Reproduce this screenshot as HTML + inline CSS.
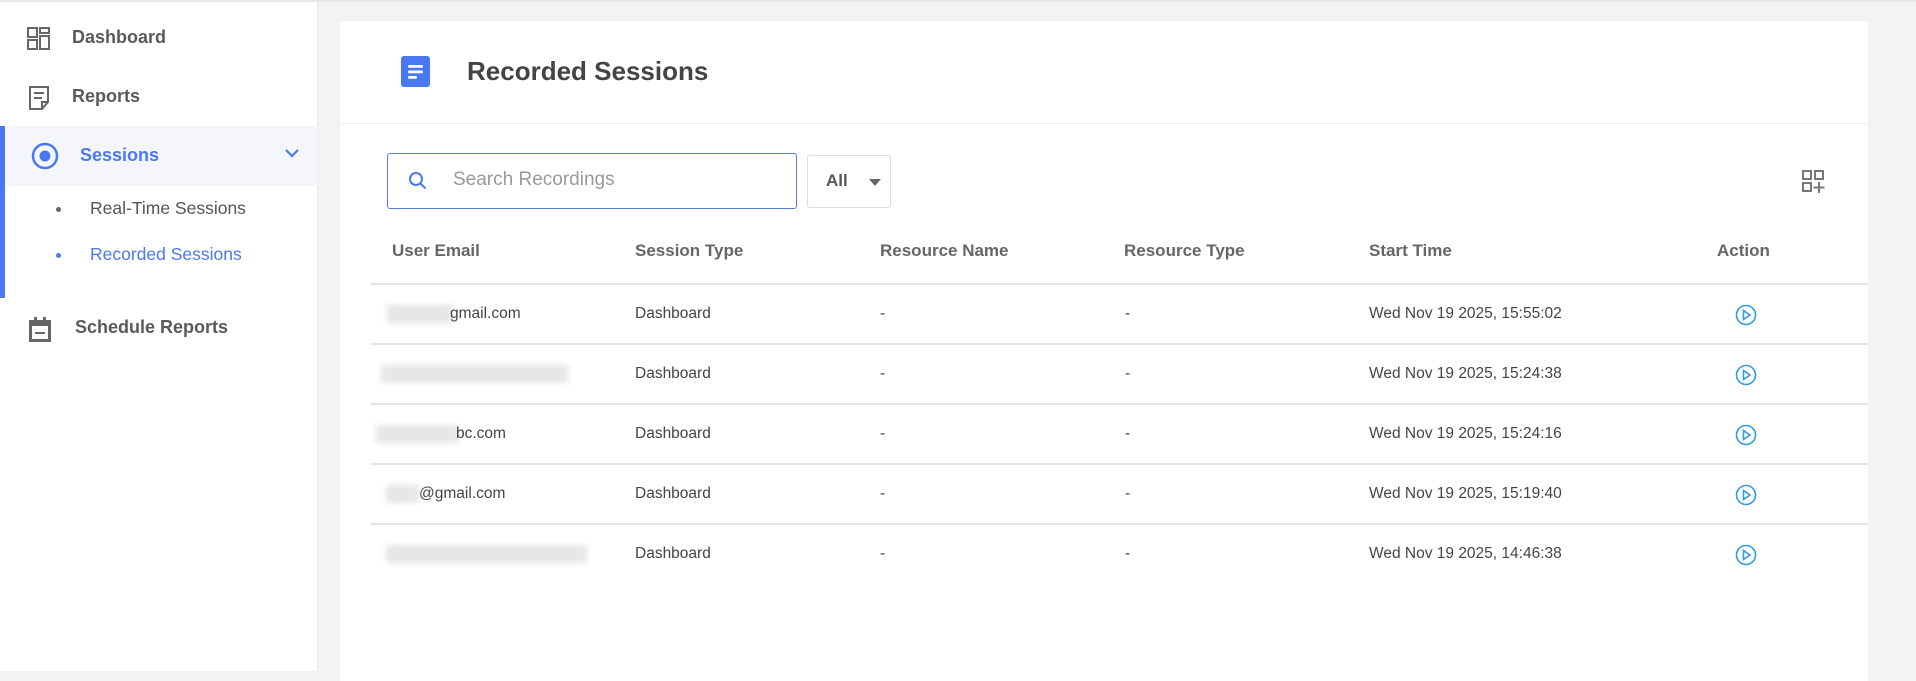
<!DOCTYPE html>
<html><head><meta charset="utf-8"><style>
*{box-sizing:border-box;margin:0;padding:0}
body{width:1916px;height:671px;overflow:hidden;background:#f3f3f3;font-family:"Liberation Sans",sans-serif;position:relative}
.side{position:absolute;left:0;top:0;width:318px;height:671px;background:#fff;border-right:1px solid #ececec}
.it{position:absolute;font-size:18px;font-weight:bold;color:#5a5a5a}
.sub{position:absolute;font-size:17.5px;color:#555}
.card{position:absolute;left:340px;top:21px;width:1528px;height:660px;background:#fff}
.th{position:absolute;top:220px;font-size:17px;font-weight:bold;color:#666}
.td{position:absolute;font-size:15.5px;color:#444}
.ln{position:absolute;left:31px;width:1497px;height:2px;background:#e4e4e4}
.blur{position:absolute;height:18px;background:#e6e6e6;filter:blur(3px)}
.pl{position:absolute;left:1395px}
</style></head><body>
<div class="side">
 <svg style="position:absolute;left:27px;top:27px" width="23" height="23" viewBox="0 0 23 23" fill="none" stroke="#666" stroke-width="2"><rect x="1" y="1" width="9" height="9"/><rect x="13" y="1" width="9" height="5"/><rect x="1" y="13" width="9" height="9"/><rect x="13" y="9" width="9" height="13"/></svg>
 <div class="it" style="left:72px;top:27px">Dashboard</div>
 <svg style="position:absolute;left:29px;top:86px" width="20" height="24" viewBox="0 0 20 24" fill="none" stroke="#666" stroke-width="2"><path d="M1 1h18v15l-6 7H1z M13 23v-7h6 M5 7h10 M5 12h8"/></svg>
 <div class="it" style="left:72px;top:86px">Reports</div>
 <div style="position:absolute;left:0;top:126px;width:318px;height:60px;background:#f4f6fc"></div>
 <div style="position:absolute;left:0;top:126px;width:5px;height:172px;background:#4a78f5"></div>
 <svg style="position:absolute;left:31px;top:142px" width="28" height="28" viewBox="0 0 28 28"><circle cx="14" cy="14" r="12" fill="none" stroke="#4a78f5" stroke-width="2.5"/><circle cx="14" cy="14" r="5.5" fill="#4a78f5"/></svg>
 <div class="it" style="left:80px;top:145px;color:#4a78f5">Sessions</div>
 <svg style="position:absolute;left:284px;top:148px" width="16" height="10" viewBox="0 0 16 10" fill="none" stroke="#4a78f5" stroke-width="2.2"><path d="M2 2l6 6 6-6"/></svg>
 <div style="position:absolute;left:56px;top:207px;width:5px;height:5px;border-radius:50%;background:#666"></div>
 <div class="sub" style="left:90px;top:198px">Real-Time Sessions</div>
 <div style="position:absolute;left:56px;top:253px;width:5px;height:5px;border-radius:50%;background:#4a78f5"></div>
 <div class="sub" style="left:90px;top:244px;color:#4a78f5">Recorded Sessions</div>
 <svg style="position:absolute;left:28px;top:317px" width="24" height="26" viewBox="0 0 24 26"><rect x="1" y="3" width="22" height="22" fill="#666"/><rect x="4" y="9" width="16" height="13" fill="#fff"/><rect x="6" y="0" width="3" height="5" fill="#666"/><rect x="15" y="0" width="3" height="5" fill="#666"/><rect x="7" y="15" width="10" height="2" fill="#666"/></svg>
 <div class="it" style="left:75px;top:317px">Schedule Reports</div>
</div>
<div style="position:absolute;left:0;top:0;width:1916px;height:2px;background:#e6e6e6"></div>
<div class="card">
 <svg style="position:absolute;left:61px;top:35px" width="29" height="31" viewBox="0 0 29 31"><rect width="29" height="31" rx="3" fill="#4a78f5"/><rect x="7" y="9" width="15" height="2.8" rx="1.4" fill="#fff"/><rect x="7" y="14.5" width="15" height="2.8" rx="1.4" fill="#fff"/><rect x="7" y="20" width="9" height="2.8" rx="1.4" fill="#fff"/></svg>
 <div style="position:absolute;left:127px;top:35px;font-size:26px;font-weight:bold;color:#444">Recorded Sessions</div>
 <div style="position:absolute;left:0;top:102px;width:1528px;height:1px;background:#eee"></div>
 <div style="position:absolute;left:47px;top:132px;width:410px;height:56px;border:1px solid #5a7fd0;border-radius:3px"></div>
 <svg style="position:absolute;left:68px;top:150px" width="20" height="20" viewBox="0 0 20 20" fill="none" stroke="#4a78f5" stroke-width="2"><circle cx="8" cy="8" r="6"/><path d="M12.5 12.5l5 5"/></svg>
 <div style="position:absolute;left:113px;top:148px;font-size:19px;color:#999">Search Recordings</div>
 <div style="position:absolute;left:467px;top:134px;width:84px;height:53px;border:1px solid #ddd;border-radius:3px"></div>
 <div style="position:absolute;left:486px;top:150px;font-size:17px;font-weight:bold;color:#555">All</div>
 <div style="position:absolute;left:529px;top:158px;border-left:6px solid transparent;border-right:6px solid transparent;border-top:7px solid #666"></div>
 <svg style="position:absolute;left:1462px;top:149px" width="24" height="24" viewBox="0 0 24 24" fill="none" stroke="#777" stroke-width="2"><rect x="1" y="1" width="8" height="8"/><rect x="13" y="1" width="8" height="8"/><rect x="1" y="13" width="8" height="8"/><path d="M17 12v11 M11.5 17.5h11"/></svg>
 <div class="th" style="left:52px">User Email</div>
 <div class="th" style="left:295px">Session Type</div>
 <div class="th" style="left:540px">Resource Name</div>
 <div class="th" style="left:784px">Resource Type</div>
 <div class="th" style="left:1029px">Start Time</div>
 <div class="th" style="left:1377px">Action</div>
 <div class="ln" style="top:262px"></div>
 <div class="blur" style="left:47px;top:284px;width:65px"></div><div class="td" style="left:110px;top:284px">gmail.com</div>
 <div class="blur" style="left:41px;top:344px;width:187px"></div>
 <div class="blur" style="left:36px;top:404px;width:83px"></div><div class="td" style="left:116px;top:404px">bc.com</div>
 <div class="blur" style="left:46px;top:464px;width:33px"></div><div class="td" style="left:79px;top:464px">@gmail.com</div>
 <div class="blur" style="left:46px;top:524px;width:201px"></div>
 <div class="ln" style="top:322px"></div><div class="ln" style="top:382px"></div><div class="ln" style="top:442px"></div><div class="ln" style="top:502px"></div>
 <div class="td" style="left:295px;top:284px">Dashboard</div><div class="td" style="left:540px;top:284px">-</div><div class="td" style="left:785px;top:284px">-</div><div class="td" style="left:1029px;top:284px">Wed Nov 19 2025, 15:55:02</div>
 <div class="td" style="left:295px;top:344px">Dashboard</div><div class="td" style="left:540px;top:344px">-</div><div class="td" style="left:785px;top:344px">-</div><div class="td" style="left:1029px;top:344px">Wed Nov 19 2025, 15:24:38</div>
 <div class="td" style="left:295px;top:404px">Dashboard</div><div class="td" style="left:540px;top:404px">-</div><div class="td" style="left:785px;top:404px">-</div><div class="td" style="left:1029px;top:404px">Wed Nov 19 2025, 15:24:16</div>
 <div class="td" style="left:295px;top:464px">Dashboard</div><div class="td" style="left:540px;top:464px">-</div><div class="td" style="left:785px;top:464px">-</div><div class="td" style="left:1029px;top:464px">Wed Nov 19 2025, 15:19:40</div>
 <div class="td" style="left:295px;top:524px">Dashboard</div><div class="td" style="left:540px;top:524px">-</div><div class="td" style="left:785px;top:524px">-</div><div class="td" style="left:1029px;top:524px">Wed Nov 19 2025, 14:46:38</div>
 <svg class="pl" style="top:283px" width="22" height="22" viewBox="0 0 22 22" fill="none" stroke="#2f9be0" stroke-width="1.6"><circle cx="11" cy="11" r="9.5"/><path d="M8.5 6.5v9l6.5-4.5z"/></svg>
 <svg class="pl" style="top:343px" width="22" height="22" viewBox="0 0 22 22" fill="none" stroke="#2f9be0" stroke-width="1.6"><circle cx="11" cy="11" r="9.5"/><path d="M8.5 6.5v9l6.5-4.5z"/></svg>
 <svg class="pl" style="top:403px" width="22" height="22" viewBox="0 0 22 22" fill="none" stroke="#2f9be0" stroke-width="1.6"><circle cx="11" cy="11" r="9.5"/><path d="M8.5 6.5v9l6.5-4.5z"/></svg>
 <svg class="pl" style="top:463px" width="22" height="22" viewBox="0 0 22 22" fill="none" stroke="#2f9be0" stroke-width="1.6"><circle cx="11" cy="11" r="9.5"/><path d="M8.5 6.5v9l6.5-4.5z"/></svg>
 <svg class="pl" style="top:523px" width="22" height="22" viewBox="0 0 22 22" fill="none" stroke="#2f9be0" stroke-width="1.6"><circle cx="11" cy="11" r="9.5"/><path d="M8.5 6.5v9l6.5-4.5z"/></svg>
</div>
</body></html>
